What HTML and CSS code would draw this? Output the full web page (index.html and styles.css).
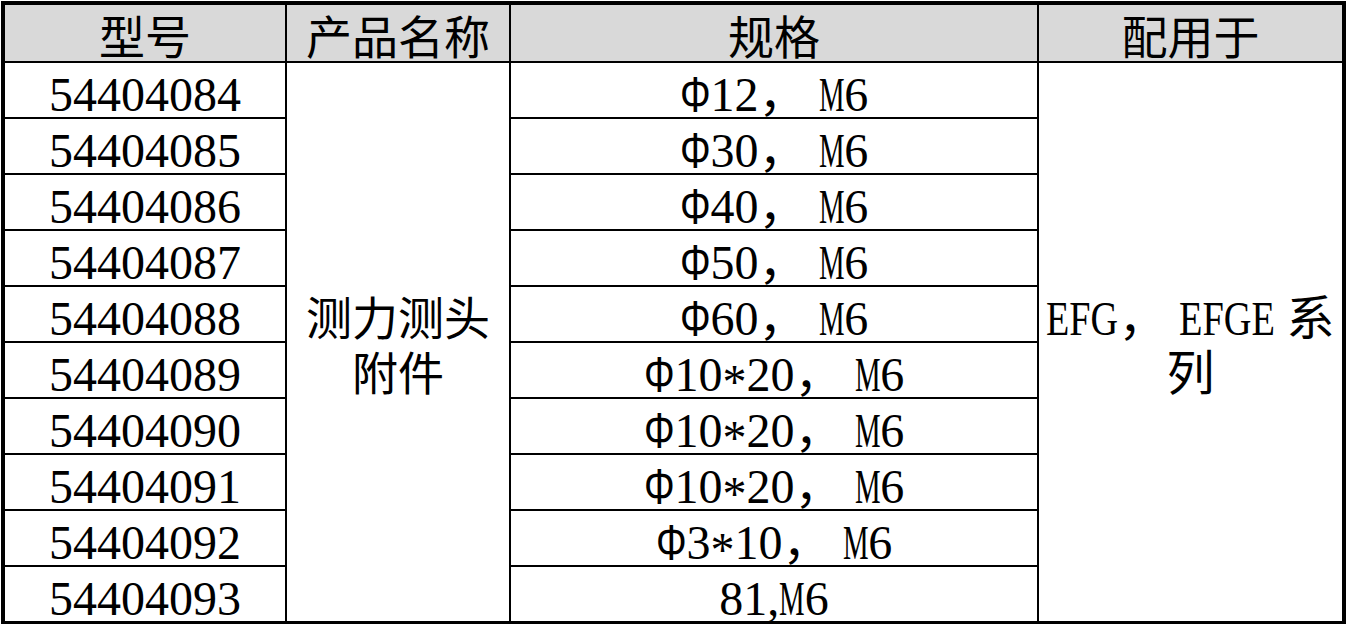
FILE: index.html
```html
<!DOCTYPE html>
<html>
<head>
<meta charset="utf-8">
<title>测力测头附件</title>
<link rel="stylesheet" href="styles.css">
</head>
<body>
<div class="sheet">
  <div class="hd">型号</div>
  <div class="hd">产品名称</div>
  <div class="hd">规格</div>
  <div class="hd">配用于</div>

  <div class="cell num">54404084</div>
  <div class="cell name"><div class="block">测力测头<br>附件</div></div>
  <div class="cell spec"><span class="phi">Φ</span><span class="lat">12</span>， <span class="m">M</span><span class="lat">6</span></div>
  <div class="cell usage"><div class="block"><span class="efg">EFG</span>， <span class="efge">EFGE</span> 系<br>列</div></div>

  <div class="cell num">54404085</div>
  <div class="cell spec"><span class="phi">Φ</span><span class="lat">30</span>， <span class="m">M</span><span class="lat">6</span></div>

  <div class="cell num">54404086</div>
  <div class="cell spec"><span class="phi">Φ</span><span class="lat">40</span>， <span class="m">M</span><span class="lat">6</span></div>

  <div class="cell num">54404087</div>
  <div class="cell spec"><span class="phi">Φ</span><span class="lat">50</span>， <span class="m">M</span><span class="lat">6</span></div>

  <div class="cell num">54404088</div>
  <div class="cell spec"><span class="phi">Φ</span><span class="lat">60</span>， <span class="m">M</span><span class="lat">6</span></div>

  <div class="cell num">54404089</div>
  <div class="cell spec"><span class="phi">Φ</span><span class="lat">10</span><span class="ast">*</span><span class="lat">20</span>， <span class="m">M</span><span class="lat">6</span></div>

  <div class="cell num">54404090</div>
  <div class="cell spec"><span class="phi">Φ</span><span class="lat">10</span><span class="ast">*</span><span class="lat">20</span>， <span class="m">M</span><span class="lat">6</span></div>

  <div class="cell num">54404091</div>
  <div class="cell spec"><span class="phi">Φ</span><span class="lat">10</span><span class="ast">*</span><span class="lat">20</span>， <span class="m">M</span><span class="lat">6</span></div>

  <div class="cell num">54404092</div>
  <div class="cell spec"><span class="phi">Φ</span><span class="lat">3</span><span class="ast">*</span><span class="lat">10</span>， <span class="m">M</span><span class="lat">6</span></div>

  <div class="cell num">54404093</div>
  <div class="cell spec"><span class="lat">81,</span><span class="m">M</span><span class="lat">6</span></div>
</div>
</body>
</html>
```

FILE: styles.css
```css
html, body {
  margin: 0;
  padding: 0;
  background: #ffffff;
}

.sheet {
  box-sizing: border-box;
  margin: 1px 0 0 1px;
  width: 1345px;
  height: 623px;
  border-style: solid;
  border-color: #000000;
  border-width: 4px 4px 3px 4px;
  display: grid;
  grid-template-columns: 280px 222px 526px 303px;
  grid-template-rows: 56px repeat(10, 54px);
  gap: 2px;
  background: #000000;
  font-family: "Liberation Serif", "Noto Sans CJK SC", serif;
  color: #000000;
}

.hd {
  background: #d9d9d9;
  font-family: "Noto Sans CJK SC", sans-serif;
  font-size: 46px;
  line-height: 46px;
  padding-top: 6px;
  text-align: center;
}

.cell {
  background: #ffffff;
  text-align: center;
  white-space: nowrap;
}

.num,
.spec {
  font-size: 48px;
  line-height: 44px;
  padding-top: 10px;
}

.num,
.lat,
.m,
.efg,
.efge,
.ast {
  font-family: "Liberation Serif", serif;
}

.name {
  grid-row: span 10;
  display: flex;
  flex-direction: column;
  justify-content: center;
  font-family: "Liberation Serif", "Noto Sans CJK SC", sans-serif;
  font-size: 46px;
  line-height: 55px;
  padding-top: 9px;
  box-sizing: border-box;
}

.usage {
  grid-row: span 10;
  display: flex;
  flex-direction: column;
  justify-content: center;
  font-size: 48px;
  line-height: 55px;
  padding-top: 8px;
  box-sizing: border-box;
}

.block {
  text-align: center;
}

.phi {
  display: inline-block;
  font-family: "Liberation Sans", sans-serif;
  font-weight: 400;
  transform: scale(0.8, 1.06);
  transform-origin: 0 60%;
  margin-right: -7.4px;
}

.m {
  display: inline-block;
  transform: scaleX(0.6);
  transform-origin: 0 50%;
  margin-right: -17px;
}

.efg {
  display: inline-block;
  transform: scaleX(0.794);
  transform-origin: 0 50%;
  margin-right: -18.6px;
}

.efge {
  display: inline-block;
  transform: scaleX(0.8);
  transform-origin: 0 50%;
  margin-right: -24px;
}

.ast {
  line-height: 0;
  vertical-align: -0.14em;
}
```
